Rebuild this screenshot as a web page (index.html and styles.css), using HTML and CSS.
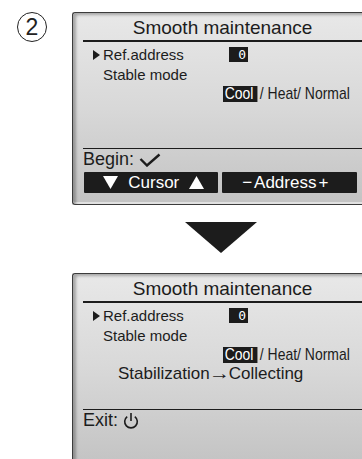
FILE: index.html
```html
<!DOCTYPE html>
<html lang="en">
<head>
<meta charset="utf-8">
<title>Smooth maintenance</title>
<link rel="stylesheet" href="styles.css">
</head>
<body>
  <div class="step">
    <div class="step-num"><span class="circled">2</span></div>
    <div class="flow">
      <div class="screen">
        <div class="title">Smooth maintenance</div>
        <div class="rows">
          <div class="row"><span class="cursor"></span>Ref.address<span class="value">0</span></div>
          <div class="row">Stable mode</div>
          <div class="row options"><span class="narrow"><span class="sel">Cool</span>/ Heat/ Normal</span></div>
          <div class="row status"></div>
        </div>
        <div class="footer">
          <div class="hint">Begin:
            <svg class="check" width="22" height="14" viewBox="0 0 22 14"><polyline points="1.5,6 8,12.5 20.5,1.5" fill="none" stroke="#1c1c1c" stroke-width="2.4"/></svg>
          </div>
          <div class="keys">
            <div class="key">
              <svg width="15" height="13" viewBox="0 0 15 13"><polygon points="0,0 15,0 7.5,13" fill="#fff"/></svg>
              <span>Cursor</span>
              <svg width="15" height="13" viewBox="0 0 15 13"><polygon points="0,13 15,13 7.5,0" fill="#fff"/></svg>
            </div>
            <div class="key addr"><span class="pm">&minus;</span>Address<span class="pm">+</span></div>
          </div>
        </div>
      </div>

      <div class="down-arrow"></div>

      <div class="screen">
        <div class="title">Smooth maintenance</div>
        <div class="rows">
          <div class="row"><span class="cursor"></span>Ref.address<span class="value">0</span></div>
          <div class="row">Stable mode</div>
          <div class="row options"><span class="narrow"><span class="sel">Cool</span>/ Heat/ Normal</span></div>
          <div class="row status">Stabilization<span class="arrow">&rarr;</span>Collecting</div>
        </div>
        <div class="footer">
          <div class="hint">Exit:
            <svg class="power" width="16" height="18" viewBox="0 0 16 18"><path d="M4.2 4.6 A6.3 6.3 0 1 0 11.8 4.6" fill="none" stroke="#1c1c1c" stroke-width="1.6"/><line x1="8" y1="1" x2="8" y2="9" stroke="#1c1c1c" stroke-width="1.6"/></svg>
          </div>
          <div class="keys empty"></div>
        </div>
      </div>
    </div>
  </div>
</body>
</html>
```
FILE: styles.css
```css
body { margin:0; background:#fff; overflow:hidden; font-family:"Liberation Sans", Arial, sans-serif; color:#1c1c1c; }

.step { display:flex; padding-top:12px; }
.step-num { width:72px; flex:none; display:flex; justify-content:center; }
.circled {
  width:30px; height:30px; margin-left:-8px; border:1.5px solid #222; border-radius:50%;
  box-sizing:border-box; display:flex; align-items:center; justify-content:center;
  font-size:23px; line-height:1; color:#222;
}
.flow { display:flex; flex-direction:column; align-items:flex-start; flex:none; width:290px; }

/* LCD panel, cut off by the right edge of the page */
.screen {
  width:290px; height:193px; flex:none; box-sizing:border-box;
  padding:0 0 0 10px;
  border:1px solid #3c3c3c; border-right:none; border-radius:3px 0 0 3px;
  background:linear-gradient(#e8e8e8, #d8d8d8 50%, #c3c3c3);
  box-shadow: inset 4px 3px 3px -1px rgba(0,0,0,.28), inset 0 -2px 0 rgba(255,255,255,.5);
  display:flex; flex-direction:column;
}
.title {
  height:27px; line-height:30px; text-align:center; font-size:19px;
  border-bottom:2px solid #1c1c1c;
}
.rows { padding-top:3px; height:103px; }
.row { height:20px; line-height:20px; font-size:15px; padding-left:20px; position:relative; white-space:nowrap; }
.cursor {
  position:absolute; left:10px; top:5px;
  border-left:7px solid #1c1c1c; border-top:5px solid transparent; border-bottom:5px solid transparent;
}
.value {
  position:absolute; left:146px; top:2px; width:19px; height:15px;
  background:#1c1c1c; color:#fff; text-align:right; box-sizing:border-box; padding-right:2px;
  font:13px/15px "DejaVu Sans Mono", monospace;
}
.options { height:18px; line-height:18px; padding-left:140px; font-size:17px; }
.narrow { display:inline-block; transform:scaleX(.82); transform-origin:left center; }
.sel { display:inline-block; background:#1c1c1c; color:#fff; padding:0 5px 0 2px; margin-right:3px; line-height:16px; }
.status { padding-left:35px; font-size:17px; line-height:20px; }
.arrow { display:inline-block; transform:scaleX(1.25); margin:0 1px; }

.footer { border-top:1px solid #1c1c1c; margin-top:auto; margin-bottom:11px; }
.hint { height:20px; line-height:21px; font-size:18px; display:flex; align-items:center; gap:5px; }
.check { margin-top:2px; }
.power { margin-top:1px; }
.keys { display:flex; gap:4px; margin:3px 5px 0 1px; height:21px; }
.key {
  flex:1; background:#1c1c1c; color:#fff; border-radius:1px;
  font-size:17px; line-height:21px; padding-left:6px;
  display:flex; align-items:center; justify-content:center; gap:10px;
}
.key.addr { gap:0; padding:0 8px 0 0; }
.pm { margin:0 2px; }
.keys.empty { visibility:hidden; }

.down-arrow {
  align-self:flex-start; margin:17px 0 20px 113px;
  width:0; height:0;
  border-left:36px solid transparent; border-right:36px solid transparent;
  border-top:31px solid #1c1c1c;
}
```
